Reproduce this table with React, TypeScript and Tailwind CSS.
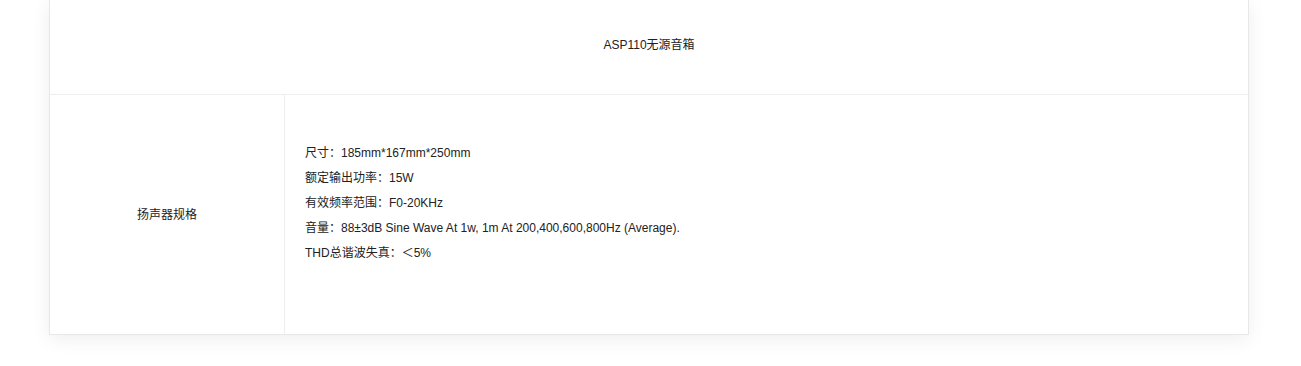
const specs = [
  "尺寸：185mm*167mm*250mm",
  "额定输出功率：15W",
  "有效频率范围：F0-20KHz",
  "音量：88±3dB Sine Wave At 1w, 1m At 200,400,600,800Hz (Average).",
  "THD总谐波失真：＜5%",
];

export default function App() {
  return (
    <div
      className="h-[366px] w-full bg-white text-[12px] text-[#222]"
      style={{ fontFamily: '"Liberation Sans", Arial, "Noto Sans CJK SC", sans-serif' }}
    >
      <div className="ml-[49px] w-[1200px] border border-t-0 border-[#e8e8e8] bg-white shadow-[0_4px_18px_rgba(0,0,0,0.07)]">
        <div className="flex h-[94px] items-start justify-center pt-[36px] leading-[18px]">
          ASP110无源音箱
        </div>
        <div className="flex border-t border-[#eee]">
          <div className="flex w-[234px] shrink-0 items-center justify-center pt-[1px]">扬声器规格</div>
          <div className="flex-1 border-l border-[#eee] px-5 pt-[46px] pb-[43px]">
            {specs.map((s) => (
              <p key={s} className="leading-[25px]">
                {s}
              </p>
            ))}
            <p className="h-[25px]" />
          </div>
        </div>
      </div>
    </div>
  );
}
